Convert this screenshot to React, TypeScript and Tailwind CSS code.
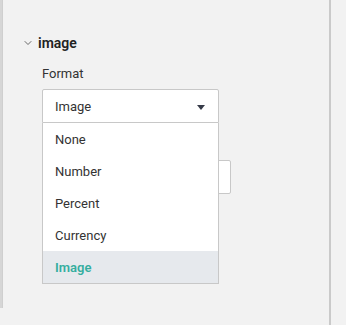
import { ChevronDown } from "lucide-react";

const options = ["None", "Number", "Percent", "Currency", "Image"];

const App = () => {
  const selected = "Image";
  return (
    <div className="w-[346px] h-[325px] bg-[#f2f2f2] flex overflow-hidden font-['Roboto',sans-serif]">
      {/* left edge strip */}
      <div className="w-[3px] h-[308px] bg-[#d6d6d6] border-r border-[#cfcfcf]" />
      <div className="w-[328px] h-full border-r-2 border-[#cacaca] pt-[33px]">
        <div className="flex items-center pl-[19px] h-[20px]">
          <ChevronDown className="w-[12px] h-[12px] text-[#555]" strokeWidth={1.75} />
          <span className="ml-[4px] text-[14px] font-semibold text-[#222]">image</span>
        </div>
        <div className="pl-[39px] mt-[10px]">
          <div className="text-[13px] text-[#333] leading-[20px] pt-[1px]">Format</div>
          <div className="relative z-10 mt-[5px] w-[177px]">
            <div className="h-[34px] bg-white border border-[#c8c8c8] rounded-t-[2px] flex items-center justify-between pl-[12px] pr-[13px] pt-[2px]">
              <span className="text-[13px] text-[#333]">{selected}</span>
              <svg width="8" height="5" viewBox="0 0 8 5">
                <path d="M0 0h8L4 5z" fill="#363a48" />
              </svg>
            </div>
            <div className="absolute top-full left-0 w-[177px] bg-white border border-t-0 border-[#c8c8c8]">
              {options.map((o) => (
                <div
                  key={o}
                  className={
                    o === selected
                      ? "h-[32px] flex items-center pl-[12px] pt-[2px] text-[13px] font-semibold text-[#35ae9f] bg-[#e6e9ed]"
                      : "h-[32px] flex items-center pl-[12px] pt-[2px] text-[13px] text-[#333]"
                  }
                >
                  {o}
                </div>
              ))}
            </div>
          </div>
          {/* field behind the open menu */}
          <div className="mt-[37px] w-[189px] h-[34px] bg-white border border-[#c8c8c8] rounded-[2px]" />
        </div>
      </div>
      <div className="flex-1" />
    </div>
  );
};

export default App;
